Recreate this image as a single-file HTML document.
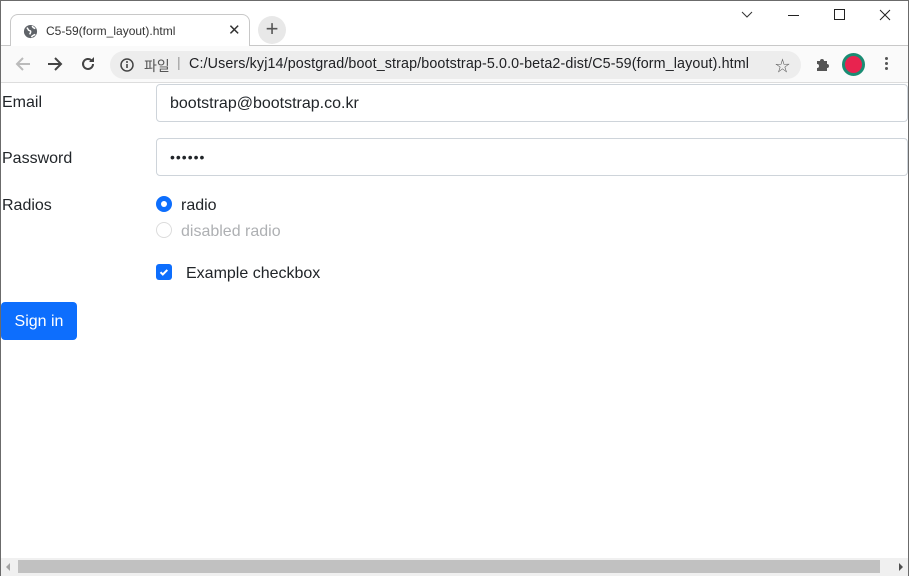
<!DOCTYPE html>
<html><head><meta charset="utf-8"><style>
*{box-sizing:border-box;margin:0;padding:0}
body{width:909px;height:576px;overflow:hidden;background:#fff;font-family:"Liberation Sans","Noto Sans CJK KR",sans-serif;position:relative;color:#212529}
.frame{position:absolute;inset:0;border:1px solid #6b6b6b;border-bottom:none}
.tabstrip{position:absolute;left:1px;top:1px;right:1px;height:45px;background:#fff;border-bottom:1px solid #c8c8c8}
.tab{position:absolute;left:9px;top:13px;width:240px;height:34px;background:#fff;border:1px solid #c8c8c8;border-bottom:none;border-radius:8px 8px 0 0;font-size:12px;color:#333}
.toolbar{position:absolute;left:1px;top:46px;right:1px;height:37px;background:#fafafa;border-bottom:1px solid #ddd}
.omni{position:absolute;left:109px;top:5px;width:691px;height:28px;border-radius:14px;background:#ededed;font-size:14px;color:#202124}
.content{position:absolute;left:1px;top:84px;right:1px;bottom:18px;font-size:16px}
.lbl{position:absolute;left:1px}
.inp{position:absolute;left:155px;right:0;height:38px;border:1px solid #ced4da;border-radius:4px;padding:0 13px;line-height:36px}
.scroll{position:absolute;left:1px;right:1px;bottom:0;height:18px;background:#f0f0f0}
</style></head><body>
<div class="frame"></div>
<div class="tabstrip">
 <div class="tab">
  <svg style="position:absolute;left:12px;top:9px" width="15" height="15" viewBox="0 0 16 16"><circle cx="8" cy="8" r="7" fill="#5f6368"/><path d="M4 4c2 1 1 3 3 3s1 3 0 4M10 2c0 2 2 2 3 3M9 14c1-2 3-2 4-3" stroke="#fff" stroke-width="1.6" fill="none"/></svg>
  <span style="position:absolute;left:35px;top:9px">C5-59(form_layout).html</span>
  <span style="position:absolute;left:217px;top:6px;font-size:15px;color:#333">✕</span>
 </div>
 <div style="position:absolute;left:257px;top:15px;width:28px;height:28px;border-radius:50%;background:#e8e8e8;text-align:center;line-height:26px;font-size:22px;color:#555">+</div>
 <svg style="position:absolute;left:740px;top:10px" width="12" height="8"><path d="M1 1l5 5 5-5" stroke="#333" fill="none"/></svg>
 <div style="position:absolute;left:787px;top:14px;width:11px;height:1px;background:#222"></div>
 <div style="position:absolute;left:833px;top:8px;width:11px;height:11px;border:1px solid #222"></div>
 <svg style="position:absolute;left:878px;top:8px" width="12" height="12"><path d="M1 1l10 10M11 1L1 11" stroke="#222"/></svg>
</div>
<div class="toolbar">
 <svg style="position:absolute;left:14px;top:10px" width="16" height="16"><path d="M15 8H2M8 2L2 8l6 6" stroke="#bbb" stroke-width="2" fill="none"/></svg>
 <svg style="position:absolute;left:46px;top:10px" width="16" height="16"><path d="M1 8h13M8 2l6 6-6 6" stroke="#444" stroke-width="2" fill="none"/></svg>
 <svg style="position:absolute;left:79px;top:10px" width="16" height="16"><path d="M13 8a5 5 0 1 1-1.5-3.6" stroke="#444" stroke-width="2" fill="none"/><path d="M14 1v5h-5z" fill="#444"/></svg>
 <div class="omni">
  <svg style="position:absolute;left:10px;top:7px" width="14" height="14"><circle cx="7" cy="7" r="6" stroke="#444" stroke-width="1.5" fill="none"/><path d="M7 6v4" stroke="#444" stroke-width="1.6"/><circle cx="7" cy="4" r="1" fill="#444"/></svg>
  <span style="position:absolute;left:34px;top:5px;color:#555">파일</span>
  <span style="position:absolute;left:67px;top:3px;color:#999">|</span>
  <span style="position:absolute;left:79px;top:5px;font-size:14.3px;letter-spacing:0.12px">C:/Users/kyj14/postgrad/boot_strap/bootstrap-5.0.0-beta2-dist/C5-59(form_layout).html</span>
  <span style="position:absolute;left:665px;top:4px;font-size:15px;color:#555">☆</span>
 </div>
 <svg style="position:absolute;left:813px;top:10px" width="16" height="16"><path d="M3 5h3a2 2 0 0 1 4 0h3v3a2 2 0 0 1 0 4v3H3v-3a2 2 0 0 0 0-4z" fill="#555"/></svg>
 <div style="position:absolute;left:841px;top:7px;width:23px;height:23px;border-radius:50%;background:#e8234f;border:3px solid #1a8c73"></div>
 <div style="position:absolute;left:884px;top:11px;width:3px;line-height:0">
  <div style="width:3px;height:3px;background:#555;border-radius:50%;margin-bottom:2px"></div><div style="width:3px;height:3px;background:#555;border-radius:50%;margin-bottom:2px"></div><div style="width:3px;height:3px;background:#555;border-radius:50%"></div>
 </div>
</div>
<div class="content">
 <div class="lbl" style="top:10px">Email</div>
 <div class="inp" style="top:0;line-height:38px">bootstrap@bootstrap.co.kr</div>
 <div class="lbl" style="top:66px">Password</div>
 <div class="inp" style="top:54px;font-size:14px;letter-spacing:1px">••••••</div>
 <div class="lbl" style="top:113px">Radios</div>
 <div style="position:absolute;left:155px;top:112px;width:16px;height:16px;border-radius:50%;background:#0d6efd"><div style="position:absolute;left:5px;top:5px;width:6px;height:6px;border-radius:50%;background:#fff"></div></div>
 <div style="position:absolute;left:180px;top:113px">radio</div>
 <div style="position:absolute;left:155px;top:138px;width:16px;height:16px;border-radius:50%;border:1px solid #dcdcdc"></div>
 <div style="position:absolute;left:180px;top:139px;color:#aeb0b3">disabled radio</div>
 <div style="position:absolute;left:155px;top:180px;width:16px;height:16px;border-radius:3px;background:#0d6efd"><svg width="16" height="16"><path d="M4.5 8.2l2.3 2.3 4.5-4.6" stroke="#fff" stroke-width="2" fill="none"/></svg></div>
 <div style="position:absolute;left:185px;top:181px">Example checkbox</div>
 <div style="position:absolute;left:0;top:218px;width:76px;height:38px;background:#0d6efd;border-radius:4px;color:#fff;text-align:center;line-height:40px">Sign in</div>
</div>
<div class="scroll">
 <div style="position:absolute;left:17px;top:2px;width:862px;height:13px;background:#c1c1c1"></div>
 <svg style="position:absolute;left:5px;top:5px" width="5" height="8"><path d="M4 0v8L0 4z" fill="#a3a3a3"/></svg>
 <svg style="position:absolute;right:4px;top:5px" width="5" height="8"><path d="M0 0v8l4-4z" fill="#505050"/></svg>
</div>
</body></html>
